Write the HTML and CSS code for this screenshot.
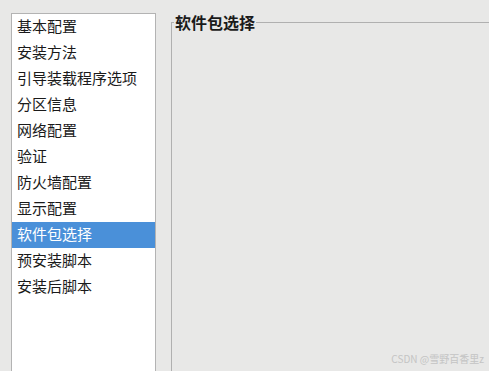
FILE: index.html
```html
<!DOCTYPE html>
<html lang="zh">
<head>
<meta charset="utf-8">
<link rel="stylesheet" href="styles.css">
</head>
<body>
<div class="page">
  <ul class="nav">
    <li>基本配置</li>
    <li>安装方法</li>
    <li>引导装载程序选项</li>
    <li>分区信息</li>
    <li>网络配置</li>
    <li>验证</li>
    <li>防火墙配置</li>
    <li>显示配置</li>
    <li class="active">软件包选择</li>
    <li>预安装脚本</li>
    <li>安装后脚本</li>
  </ul>
  <fieldset class="panel">
    <legend>软件包选择</legend>
  </fieldset>
</div>
<div class="watermark">CSDN @雪野百香里z</div>
</body>
</html>
```
FILE: styles.css
```css
html, body {
  margin: 0;
  padding: 0;
  height: 100%;
  overflow: hidden;
}
body {
  background: #e8e8e7;
  font-family: "Noto Sans CJK SC", "Noto Sans", sans-serif;
  color: #1a1a1a;
}
.page {
  display: flex;
  gap: 15px;
  padding: 13px 0 0 11px;
  height: 100%;
  box-sizing: border-box;
}
.nav {
  list-style: none;
  margin: 0;
  padding: 0;
  width: 143px;
  background: #ffffff;
  border: 1px solid #b3b3b3;
  border-bottom: none;
  flex: none;
}
.nav li {
  height: 26px;
  line-height: 24px;
  font-size: 15px;
  padding-left: 5px;
  white-space: nowrap;
}
.nav li.active {
  background: #4a90d9;
  color: #ffffff;
}
.panel {
  flex: 1;
  margin: 0;
  padding: 0;
  border: none;
  border-top: 1px solid #b0b0b0;
  border-left: 1px solid #b0b0b0;
  min-width: 0;
}
.panel legend {
  font-size: 16px;
  font-weight: bold;
  line-height: 18px;
  padding: 0 1px;
  margin-left: 2px;
  color: #1a1a1a;
}
.watermark {
  position: absolute;
  right: 5px;
  bottom: 5px;
  font-size: 10px;
  color: #c4c4c4;
  font-family: "Noto Sans CJK SC", "Noto Sans", sans-serif;
}
```
